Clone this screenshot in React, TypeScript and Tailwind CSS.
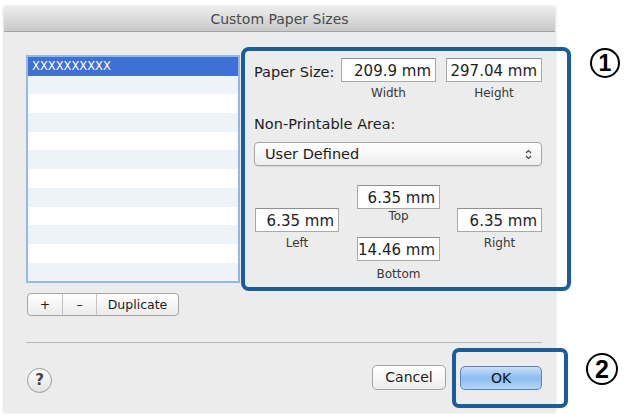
const field =
  "h-[24px] bg-white border border-[#a9a9a9] border-t-[#8f8f8f] pr-[4px] pt-[5px] text-right text-[15px] leading-[15px] text-[#1d1d1d] whitespace-nowrap";
const caption = "text-center text-[12px] leading-[14px] text-[#383838]";

function Field({ value }: { value: string }) {
  return <div className={field}>{value}</div>;
}

function Callout({ n, className }: { n: string; className: string }) {
  return (
    <div
      className={
        "flex shrink-0 items-center justify-center rounded-full border-[2.5px] border-black bg-white font-['Liberation_Sans',sans-serif] font-bold leading-none text-black " +
        className
      }
    >
      {n}
    </div>
  );
}

export default function App() {
  const rows = Array.from({ length: 12 }, (_, i) => i);

  return (
    <div className="h-[415px] w-[629px] overflow-hidden bg-white pl-[4px] pt-[7px] font-['DejaVu_Sans',sans-serif]">
      <div className="w-[551px] bg-[#ececec] pb-[4px] shadow-[0_0_3px_rgba(0,0,0,0.22)]">
        {/* title bar */}
        <div className="flex h-[25px] items-center justify-center border-b border-[#a3a3a3] bg-gradient-to-b from-[#ededed] to-[#c9c9c9] text-[14px] text-[#4a4a4a]">
          Custom Paper Sizes
        </div>

        <div className="flex items-start pl-[22px] pt-[15px]">
          {/* list of sizes */}
          <div className="mt-[8px] w-[214px] shrink-0">
            <div className="h-[228px] overflow-hidden border-2 border-[#93b8e6] bg-white">
              {rows.map((i) =>
                i === 0 ? (
                  <div key={i} className="h-[18.7px] bg-[#3d71d6] pl-[4px] text-[11.5px] leading-[18.7px] text-white">
                    XXXXXXXXXX
                  </div>
                ) : (
                  <div key={i} className={i % 2 ? "h-[18.7px] bg-[#eef3fa]" : "h-[18.7px] bg-white"} />
                )
              )}
            </div>
            <div className="ml-px mt-[10px] flex h-[23px] w-[152px] rounded-[4px] border border-[#a6a6a6] bg-gradient-to-b from-white to-[#ebebeb] text-[12.5px] leading-[21px] text-[#1d1d1d]">
              <div className="w-[35px] border-r border-[#c4c4c4] text-center">+</div>
              <div className="w-[34px] border-r border-[#c4c4c4] text-center">–</div>
              <div className="flex-1 text-center">Duplicate</div>
            </div>
          </div>

          {/* size settings, marked 1 */}
          <div className="ml-px h-[244px] w-[330px] shrink-0 rounded-[8px] border-4 border-[#1a5c9c] pl-[9px] pt-[7px] text-[#1d1d1d]">
            <div className="flex items-start">
              <div className="mt-[2px] h-[24px] w-[87px] text-[14.5px] leading-[24px]">Paper Size:</div>
              <div className="w-[95px]">
                <Field value="209.9 mm" />
                <div className={caption + " mt-[4px]"}>Width</div>
              </div>
              <div className="ml-[10px] w-[96px]">
                <Field value="297.04 mm" />
                <div className={caption + " mt-[4px]"}>Height</div>
              </div>
            </div>

            <div className="mt-[15px] text-[14.5px] leading-[18px]">Non-Printable Area:</div>

            <div className="mt-[9px] flex h-[24px] w-[288px] items-center justify-between rounded-[4px] border border-[#a5a5a5] bg-gradient-to-b from-white to-[#efefef] pl-[10px] pr-[9px] shadow-[0_1px_1px_rgba(0,0,0,0.08)]">
              <span className="text-[14.5px] leading-[18px]">User Defined</span>
              <svg width="7" height="11" viewBox="0 0 7 11" fill="none" stroke="#444" strokeWidth="1.2">
                <path d="M1 4 L3.5 1.5 L6 4" />
                <path d="M1 7 L3.5 9.5 L6 7" />
              </svg>
            </div>

            <div className="mt-[19px] flex items-start">
              <div className="ml-px mt-[23px] w-[84px]">
                <Field value="6.35 mm" />
                <div className={caption + " mt-[4px]"}>Left</div>
              </div>
              <div className="ml-[18px] w-[83px]">
                <Field value="6.35 mm" />
                <div className={caption}>Top</div>
                <div className="mt-[14px]">
                  <Field value="14.46 mm" />
                </div>
                <div className={caption + " mt-[6px]"}>Bottom</div>
              </div>
              <div className="ml-[17px] mt-[23px] w-[85px]">
                <Field value="6.35 mm" />
                <div className={caption + " mt-[4px]"}>Right</div>
              </div>
            </div>
          </div>

          <Callout n="1" className="ml-[19px] mt-px h-[30px] w-[30px] text-[23px]" />
        </div>

        <div className="ml-[22px] mt-[26px] h-px w-[516px] bg-[#b8b8b8]" />

        {/* buttons */}
        <div className="mt-[5px] flex items-start pl-[23px]">
          <div className="mt-[20px] flex h-[25px] w-[25px] shrink-0 items-center justify-center rounded-full border border-[#9b9b9b] bg-gradient-to-b from-white to-[#e2e2e2] text-[15px] font-bold text-[#444]">
            ?
          </div>
          <div className="ml-[320px] mt-[17px] flex h-[25px] w-[74px] shrink-0 items-center justify-center rounded-[5px] border border-[#a3a3a3] bg-gradient-to-b from-white to-[#eeeeee] text-[14px] text-[#1d1d1d]">
            Cancel
          </div>
          <div className="ml-[6px] h-[60px] w-[116px] shrink-0 rounded-[7px] border-4 border-[#1a5c9c] pl-[4px] pt-[14px]">
            <div className="flex h-[24px] w-[82px] items-center justify-center rounded-[5px] border border-[#5d83bb] bg-gradient-to-b from-[#c8e0f8] via-[#8dbcf0] to-[#b3d6f8] text-[14px] text-[#111]">
              OK
            </div>
          </div>
          <Callout n="2" className="ml-[18px] mt-[5px] h-[32px] w-[32px] text-[25px]" />
        </div>
      </div>
    </div>
  );
}
